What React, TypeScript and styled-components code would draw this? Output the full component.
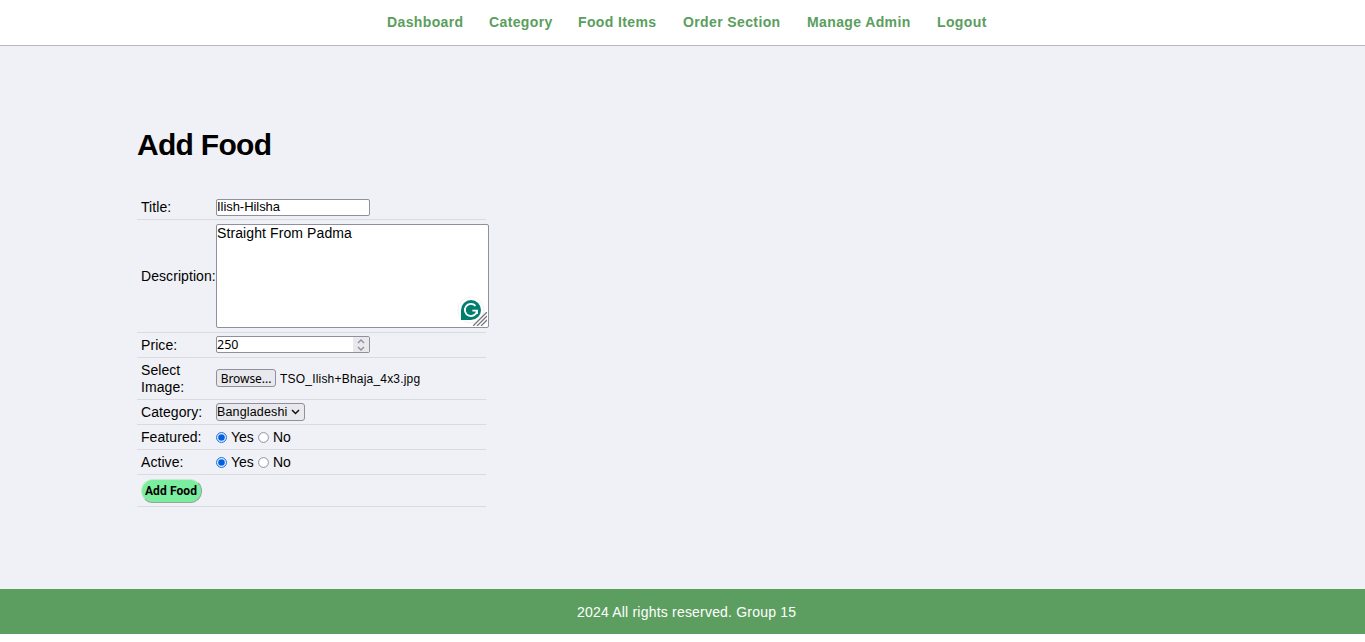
import React from 'react';
import styled, { createGlobalStyle } from 'styled-components';

const Global = createGlobalStyle`
  * { box-sizing: border-box; margin: 0; padding: 0; }
  body { background: #fff; color: #000; font: 14px/17px "Liberation Sans", Arial, sans-serif; }
`;

const Nav = styled.nav`
  height: 46px;
  display: flex;
  padding-left: 387px;
  background: #fff;
  border-bottom: 1px solid #b9b9be;
`;
const NavLink = styled.a<{ $w: number }>`
  width: ${p => p.$w}px;
  line-height: 17px;
  padding-top: 14px;
  flex: none;
  color: #5a9e5d;
  font-weight: bold;
  letter-spacing: 0.38px;
  white-space: nowrap;
`;
const Main = styled.main`
  height: 543px;
  padding: 82px 0 0 137px;
  background: #f0f1f6;
`;
const Title = styled.h1`
  font-size: 30px;
  line-height: 34px;
  height: 67px;
  letter-spacing: -0.7px;
`;
const Form = styled.form`
  width: 349px;
`;
const Row = styled.div<{ $h: number }>`
  height: ${p => p.$h}px;
  display: flex;
  align-items: center;
  padding-left: 4px;
  border-bottom: 1px solid #dadbdf;
`;
const Label = styled.label`
  width: 75px;
  flex: none;
  letter-spacing: 0.07px;
`;
const Field = styled.div<{ $w: number; $h: number; $top?: number }>`
  width: ${p => p.$w}px;
  height: ${p => p.$h}px;
  margin-top: ${p => p.$top ?? 0}px;
  flex: none;
  display: flex;
  justify-content: space-between;
  position: relative;
  background: #fff;
  border: 1px solid #8f8f9d;
  border-radius: 2px;
`;
const FieldText = styled.span<{ $size?: number; $ls?: number; $font?: string; $lh?: number }>`
  font-family: ${p => p.$font ?? '"Liberation Sans"'}, sans-serif;
  font-size: ${p => p.$size ?? 13}px;
  line-height: ${p => p.$lh ?? 15}px;
  letter-spacing: ${p => p.$ls ?? 0}px;
  white-space: nowrap;
`;
const FileName = styled(FieldText)`
  padding-top: 1px;
`;
const Spinner = styled.span`
  width: 16px;
  background: #e9e9ed;
  display: flex;
  svg { display: block; }
`;
const Badge = styled.svg`
  position: absolute;
  right: 2px;
  bottom: 2px;
`;
const Grip = styled.svg`
  position: absolute;
  right: 1px;
  bottom: 1px;
`;
const Control = styled.span<{ $w: number }>`
  width: ${p => p.$w}px;
  height: 18px;
  flex: none;
  display: flex;
  align-items: center;
  background: #e9e9ed;
  border: 1px solid #8f8f9d;
  border-radius: 3px;
`;
const Browse = styled(Control)`
  justify-content: center;
  padding-top: 2px;
  margin: 0 4px 2px 0;
`;
const Select = styled(Control)`
  justify-content: space-between;
  padding-right: 4px;
`;
const Option = styled.span<{ $w: number }>`
  display: flex;
  align-items: center;
  width: ${p => p.$w}px;
  gap: 4px;
  letter-spacing: -0.1px;
  svg { flex: none; }
`;
const Submit = styled.button`
  width: 61px;
  height: 24px;
  padding: 2px 1px 0 0;
  border: 1px solid;
  border-color: #c6eccf #93a698 #93a698 #c6eccf;
  border-radius: 12px;
  background: #7bed9f;
  color: #000;
  font: bold 12px/17px Roboto, sans-serif;
  letter-spacing: 0.1px;
  white-space: nowrap;
  display: flex;
  align-items: center;
  justify-content: center;
`;
const Footer = styled.footer`
  height: 45px;
  padding: 15px 0 0 577px;
  background: #5c9e5f;
  color: #fff;
  letter-spacing: 0.2px;
`;

const Radio = ({ on }: { on?: boolean }) => (
  <svg width="11" height="11" viewBox="0 0 11 11">
    <circle cx="5.5" cy="5.5" r="4.9" fill="#fff" stroke={on ? '#0060df' : '#8f8f9d'} strokeWidth="1" />
    {on && <circle cx="5.5" cy="5.5" r="3.3" fill="#0060df" />}
  </svg>
);

const Choice = () => (
  <>
    <Option $w={42}><Radio on />Yes</Option>
    <Option $w={40}><Radio />No</Option>
  </>
);

const links: [string, number][] = [
  ['Dashboard', 102], ['Category', 89], ['Food Items', 105],
  ['Order Section', 124], ['Manage Admin', 130], ['Logout', 60],
];

export default function App() {
  return (
    <>
      <Global />
      <Nav>{links.map(([t, w]) => <NavLink key={t} $w={w}>{t}</NavLink>)}</Nav>
      <Main>
        <Title>Add Food</Title>
        <Form>
          <Row $h={25}>
            <Label>Title:</Label>
            <Field $w={154} $h={17} $top={1}><FieldText $ls={-0.05} $lh={13}>Ilish-Hilsha</FieldText></Field>
          </Row>
          <Row $h={113}>
            <Label>Description:</Label>
            <Field $w={273} $h={104}>
              <FieldText $size={14} $ls={0.1} $lh={17}>Straight From Padma</FieldText>
              <Badge width="30" height="30" viewBox="0 0 30 30">
                <circle cx="15" cy="15" r="13" fill="#fff" stroke="#f1f1f3" />
                <path d="M5 25V15a10 10 0 1 1 10 10z" fill="#027e6f" />
                <path d="M19.5 10.9A6.1 6.1 0 1 0 21 15.6H16.4M21 15.6V19" fill="none" stroke="#fff" strokeWidth="1.8" />
              </Badge>
              <Grip width="14" height="14" viewBox="0 0 14 14">
                <path d="M0 14L14 0M4 14L14 4M8 14L14 8" stroke="#77777b" strokeWidth="1.3" />
              </Grip>
            </Field>
          </Row>
          <Row $h={25}>
            <Label>Price:</Label>
            <Field $w={154} $h={17} $top={-1}>
              <FieldText $font='"Noto Sans"' $size={12.5}>250</FieldText>
              <Spinner>
                <svg width="16" height="15" viewBox="0 0 16 15" fill="none" stroke="#8f8f9d" strokeWidth="1.4">
                  <path d="M5 6l3-3 3 3M5 10l3 3 3-3" />
                </svg>
              </Spinner>
            </Field>
          </Row>
          <Row $h={42}>
            <Label>Select<br />Image:</Label>
            <Browse $w={60}><FieldText $font='"Noto Sans"' $size={12} $ls={-0.05}>Browse...</FieldText></Browse>
            <FileName $size={12} $ls={0.2} $lh={17}>TSO_Ilish+Bhaja_4x3.jpg</FileName>
          </Row>
          <Row $h={25}>
            <Label>Category:</Label>
            <Select $w={89}>
              <FieldText $size={12.5} $ls={0.15}>Bangladeshi</FieldText>
              <svg width="9" height="6" viewBox="0 0 9 6" fill="none" stroke="#111" strokeWidth="1.5">
                <path d="M1 1l3.5 3.5L8 1" />
              </svg>
            </Select>
          </Row>
          <Row $h={25}><Label>Featured:</Label><Choice /></Row>
          <Row $h={25}><Label>Active:</Label><Choice /></Row>
          <Row $h={32}><Submit type="button">Add Food</Submit></Row>
        </Form>
      </Main>
      <Footer>2024 All rights reserved. Group 15</Footer>
    </>
  );
}
